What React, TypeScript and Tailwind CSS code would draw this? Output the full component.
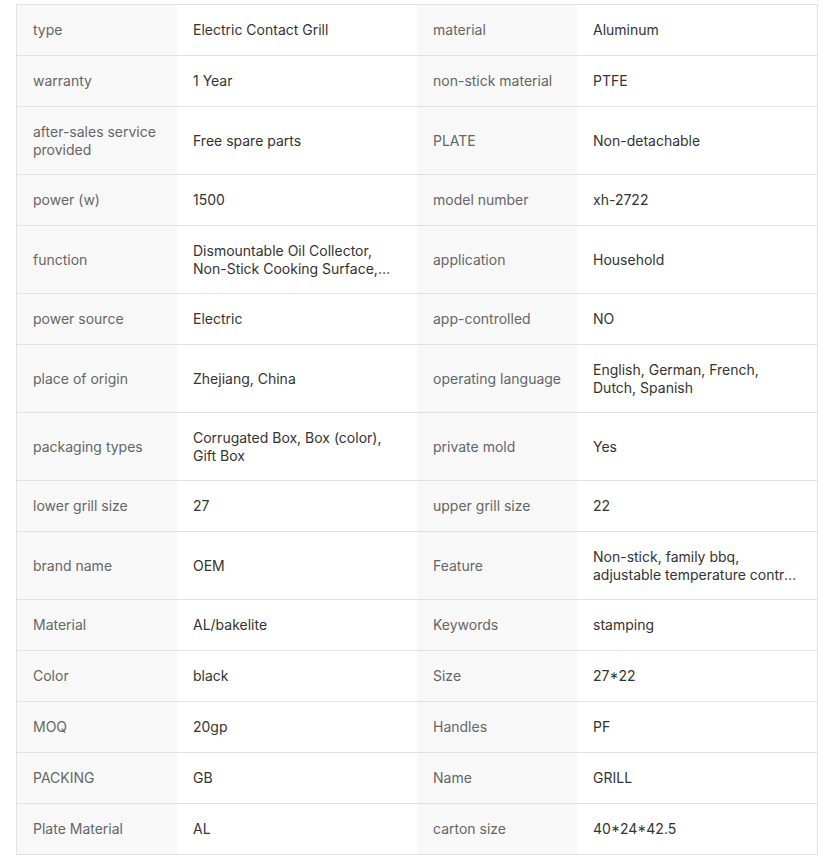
import React from "react";

type Spec = { k1: string; v1: string; k2: string; v2: string; tall?: boolean };

const specs: Spec[] = [
  { k1: "type", v1: "Electric Contact Grill", k2: "material", v2: "Aluminum" },
  { k1: "warranty", v1: "1 Year", k2: "non-stick material", v2: "PTFE" },
  { k1: "after-sales service provided", v1: "Free spare parts", k2: "PLATE", v2: "Non-detachable", tall: true },
  { k1: "power (w)", v1: "1500", k2: "model number", v2: "xh-2722" },
  {
    k1: "function",
    v1: "Dismountable Oil Collector, Non-Stick Cooking Surface, Adjustable Thermostat Control, Indicator Light",
    k2: "application",
    v2: "Household",
    tall: true,
  },
  { k1: "power source", v1: "Electric", k2: "app-controlled", v2: "NO" },
  { k1: "place of origin", v1: "Zhejiang, China", k2: "operating language", v2: "English, German, French, Dutch, Spanish", tall: true },
  { k1: "packaging types", v1: "Corrugated Box, Box (color), Gift Box", k2: "private mold", v2: "Yes", tall: true },
  { k1: "lower grill size", v1: "27", k2: "upper grill size", v2: "22" },
  {
    k1: "brand name",
    v1: "OEM",
    k2: "Feature",
    v2: "Non-stick, family bbq, adjustable temperature control, easy to clean",
    tall: true,
  },
  { k1: "Material", v1: "AL/bakelite", k2: "Keywords", v2: "stamping" },
  { k1: "Color", v1: "black", k2: "Size", v2: "27*22" },
  { k1: "MOQ", v1: "20gp", k2: "Handles", v2: "PF" },
  { k1: "PACKING", v1: "GB", k2: "Name", v2: "GRILL" },
  { k1: "Plate Material", v1: "AL", k2: "carton size", v2: "40*24*42.5" },
];

function Label({ text }: { text: string }) {
  return (
    <div className="w-[160px] flex items-center bg-[#f8f8f8] pl-4 pr-2 text-[#666666]">
      <span className="line-clamp-2">{text}</span>
    </div>
  );
}

function Value({ text }: { text: string }) {
  return (
    <div className="w-[240px] flex items-center bg-white px-4 text-[#333333]">
      <span className="line-clamp-2">{text}</span>
    </div>
  );
}

export default function App() {
  return (
    <div className="min-h-screen bg-white pt-1 font-['Inter','Liberation_Sans',sans-serif] text-[14px] leading-[18px]">
      <div className="ml-4 w-[802px] border-x border-t border-[#e2e2e2]">
        {specs.map((s) => (
          <div
            key={s.k1}
            className={`flex border-b border-[#e2e2e2] ${s.tall ? "h-[68px]" : "h-[51px]"}`}
          >
            <Label text={s.k1} />
            <Value text={s.v1} />
            <Label text={s.k2} />
            <Value text={s.v2} />
          </div>
        ))}
      </div>
    </div>
  );
}
